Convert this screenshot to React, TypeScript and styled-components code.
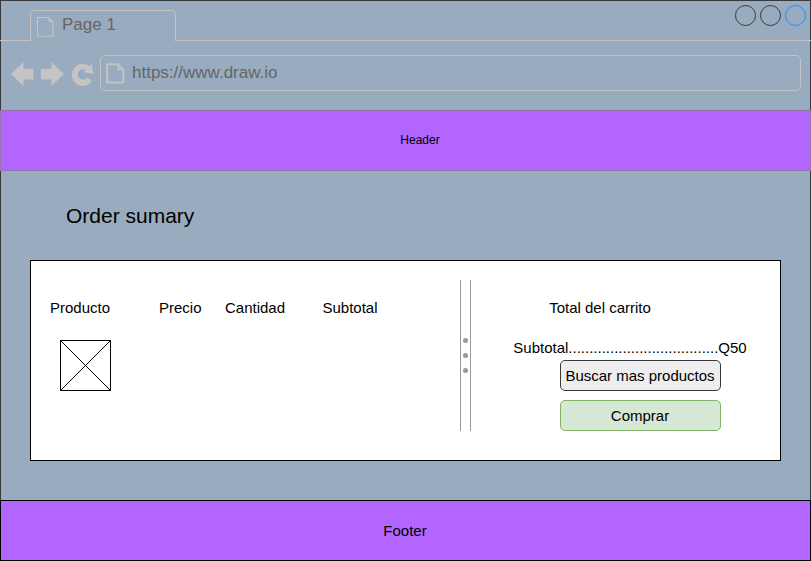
import React from "react";
import styled, { createGlobalStyle } from "styled-components";

const GlobalStyle = createGlobalStyle`
  * { box-sizing: border-box; }
  body { margin: 0; font-family: "Liberation Sans", Arial, sans-serif; color: #000; }
`;

const line = "#c4c4c4";

const Page = styled.div`
  width: 811px;
  height: 561px;
  display: flex;
  flex-direction: column;
  background: #99abbf;
  overflow: hidden;
`;

const Chrome = styled.div`
  height: 110px;
  border: 1px solid #36393d;
  border-bottom: 0;
`;

const TabStrip = styled.div`
  height: 40px;
  margin: 0 -1px;
  display: flex;
  align-items: flex-end;
`;

const StripLine = styled.div<{ $width?: number }>`
  ${(p) => (p.$width ? `width: ${p.$width}px;` : "flex: 1;")}
  height: 40px;
  border-bottom: 1px solid ${line};
  display: flex;
  justify-content: flex-end;
  gap: 4px;
  padding: 4px 5px 0 0;
`;

const Tab = styled.div`
  width: 146px;
  height: 31px;
  border: 1px solid ${line};
  border-bottom: 0;
  border-radius: 5px 5px 0 0;
  display: flex;
  padding: 6px 0 0 6px;
  gap: 8px;
`;

const ChromeText = styled.span`
  font-size: 17px;
  line-height: 20px;
  color: #666;
`;

const TabTitle = styled(ChromeText)`
  margin-top: -2px;
`;

const WindowDot = styled.svg`
  width: 21px;
  height: 21px;
  display: block;
`;

const Toolbar = styled.div`
  display: flex;
  padding: 14px 9px 0 10px;
`;

const NavIcon = styled.svg`
  display: block;
  flex: none;
  width: 84px;
  height: 26px;
  margin: 6px 5px 0 0;
`;

const AddressBar = styled.div`
  width: 701px;
  height: 36px;
  border: 1px solid ${line};
  border-radius: 5px;
  display: flex;
  flex: none;
  align-items: flex-start;
  padding: 7px 0 0 5px;
  gap: 7px;
`;

const PageIcon = styled.svg`
  display: block;
  flex: none;
`;

const Header = styled.header`
  height: 61px;
  background: #b266ff;
  border: 1px solid #9673a6;
  display: flex;
  justify-content: center;
  padding-top: 22px;
  padding-left: 29px;
  font-size: 12px;
  line-height: 14px;
`;

const Body = styled.main`
  height: 329px;
  border: solid #36393d;
  border-width: 0 1px;
  padding: 33px 29px 0;
`;

const Title = styled.h1`
  margin: 0 0 32px 36px;
  font-size: 21px;
  line-height: 24px;
  font-weight: 400;
`;

const Card = styled.section`
  width: 751px;
  height: 201px;
  background: #fff;
  border: 1px solid #000;
  display: flex;
  padding-top: 19px;
  font-size: 15px;
  line-height: 18px;
`;

const Products = styled.div`
  width: 429px;
  padding: 19px 0 0 19px;
`;

const Columns = styled.div`
  display: grid;
  grid-template-columns: 109px 66px 97.5px 80px;
`;

const Thumbnail = styled.svg`
  display: block;
  margin: 23px 0 0 10px;
`;

const Splitter = styled.div`
  width: 11px;
  height: 151px;
  border: solid #999;
  border-width: 0 1px;
  display: flex;
  flex-direction: column;
  align-items: center;
  justify-content: center;
  gap: 10px;
`;

const Grip = styled.i`
  width: 5px;
  height: 5px;
  border-radius: 50%;
  background: #999;
`;

const Cart = styled.div`
  width: 260px;
  margin-left: 39px;
  padding-top: 19px;
  display: flex;
  flex-direction: column;
  align-items: center;
`;

const CartTitle = styled.div`
  margin: 0 0 22px -80px;
`;

const SubtotalLine = styled.div`
  white-space: nowrap;
  margin: 0 0 3px -20px;
`;

const Button = styled.button<{ $fill: string; $stroke: string }>`
  width: 161px;
  height: 31px;
  flex: none;
  margin: 0 0 9px;
  padding: 0;
  border: 1px solid ${(p) => p.$stroke};
  border-radius: 5px;
  background: ${(p) => p.$fill};
  font: inherit;
  color: #000;
  white-space: nowrap;
`;

const Footer = styled.footer`
  height: 61px;
  background: #b266ff;
  border: 1px solid #000;
  display: flex;
  justify-content: center;
  padding-top: 21px;
  padding-right: 1px;
  font-size: 15px;
  line-height: 18px;
`;

export default function App() {
  return (
    <>
      <GlobalStyle />
      <Page>
        <Chrome>
          <TabStrip>
            <StripLine $width={30} />
            <Tab>
              <PageIcon width="17" height="20" viewBox="0 0 17 20" fill="none" stroke={line}>
                <path d="M.5 .5H11.5L16 5V19.2H.5ZM11.5 .5Q12.800 2 12 4.500Q14.500 4 16 5" strokeWidth="1.1" />
              </PageIcon>
              <TabTitle>Page 1</TabTitle>
            </Tab>
            <StripLine>
              {["#36393d", "#36393d", "#1e90ff"].map((c, i) => (
                <WindowDot key={i} viewBox="0 0 21 21">
                  <circle cx="10.5" cy="10.5" r="10" fill="none" stroke={c} />
                </WindowDot>
              ))}
            </StripLine>
          </TabStrip>
          <Toolbar>
            <NavIcon viewBox="0 0 84 26" fill={line}>
              <path d="M0 13 12.5 1V8H22.5V18.5H12.5V25Z" />
              <path d="M53 13 40.5 1V8H30V18.5H40.5V25Z" />
              <path d="M80.5 2.5 82.5 12.7 72 11.3 75 9.2A5.200 5.200 0 1 0 76.300 16.500L81 20A11 11 0 1 1 78.300 5Z" />
            </NavIcon>
            <AddressBar>
              <PageIcon width="19" height="21" viewBox="0 0 19 21" fill="none" stroke={line}>
                <path d="M1.2 1.2H12L17.4 6.6V19.5H1.2Z" strokeWidth="2" />
                <path d="M12.3 1V6.5H17.5" strokeWidth="1.5" />
              </PageIcon>
              <ChromeText>https://www.draw.io</ChromeText>
            </AddressBar>
          </Toolbar>
        </Chrome>
        <Header>Header</Header>
        <Body>
          <Title>Order sumary</Title>
          <Card>
            <Products>
              <Columns>
                <span>Producto</span>
                <span>Precio</span>
                <span>Cantidad</span>
                <span>Subtotal</span>
              </Columns>
              <Thumbnail width="51" height="51" viewBox="0 0 51 51" fill="none" stroke="#000">
                <path d="M.5 .5H50.5V50.5H.5ZL50.5 50.5M50.5 .5L.5 50.5" />
              </Thumbnail>
            </Products>
            <Splitter>
              <Grip />
              <Grip />
              <Grip />
            </Splitter>
            <Cart>
              <CartTitle>Total del carrito</CartTitle>
              <SubtotalLine>Subtotal{".".repeat(36)}Q50</SubtotalLine>
              <Button $fill="#eeeeee" $stroke="#36393d">Buscar mas productos</Button>
              <Button $fill="#d5e8d4" $stroke="#82b366">Comprar</Button>
            </Cart>
          </Card>
        </Body>
        <Footer>Footer</Footer>
      </Page>
    </>
  );
}
